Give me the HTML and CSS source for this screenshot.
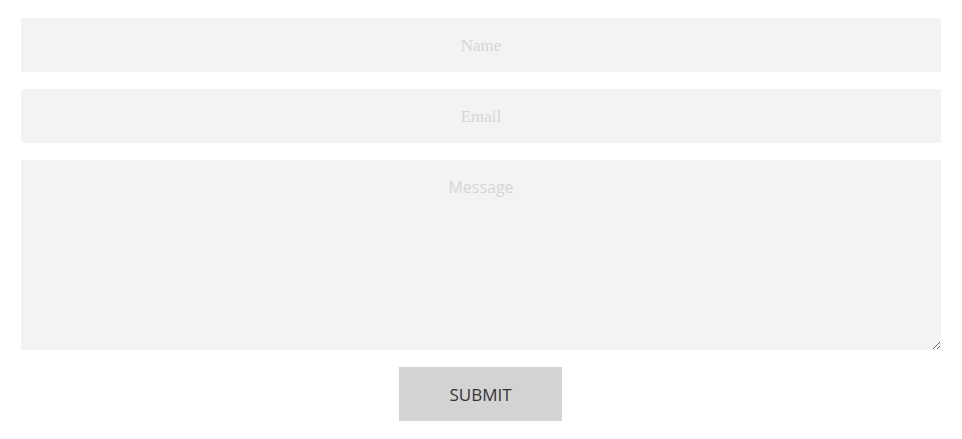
FILE: index.html
```html
<!DOCTYPE html>
<html>
<head>
<meta charset="utf-8">
<link rel="stylesheet" href="styles.css">
</head>
<body>
<form class="contact">
  <input class="field field-serif" type="text" placeholder="Name">
  <input class="field field-serif" type="email" placeholder="Email">
  <textarea class="field field-area" placeholder="Message"></textarea>
  <div class="actions">
    <button class="submit" type="button">SUBMIT</button>
  </div>
</form>
</body>
</html>
```
FILE: styles.css
```css
html, body {
  margin: 0;
  padding: 0;
  background: #ffffff;
}
.contact {
  display: flex;
  flex-direction: column;
  gap: 17px;
  padding: 18px 21px;
}
.field {
  box-sizing: border-box;
  width: 100%;
  border: none;
  outline: none;
  background: #f3f3f3;
  text-align: center;
  color: #333;
  margin: 0;
}
.field-serif {
  height: 54px;
  font-family: "Liberation Serif", serif;
  font-size: 17px;
  padding: 2px 10px 0;
}
.field-area {
  height: 190px;
  font-family: "Open Sans", sans-serif;
  font-size: 16px;
  padding: 16px 10px;
  display: block;
}
.field::placeholder {
  color: #d6d6d6;
  opacity: 1;
}
.actions {
  display: flex;
  justify-content: center;
  padding-right: 1px;
}
.submit {
  width: 163px;
  height: 54px;
  border: none;
  background: #d3d3d3;
  color: #333;
  font-family: "Open Sans", sans-serif;
  font-size: 17px;
  padding: 0;
  cursor: pointer;
}
```
